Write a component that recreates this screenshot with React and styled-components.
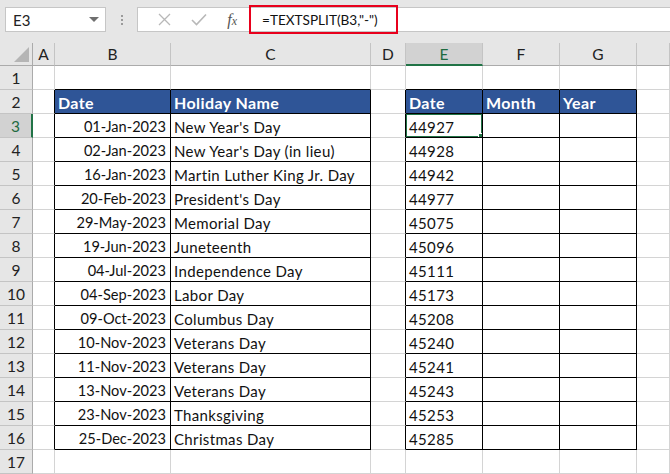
import React from "react";
import styled, { createGlobalStyle } from "styled-components";

const Global = createGlobalStyle`
  html, body { margin: 0; padding: 0; background: #fff; }
  body { width: 670px; height: 474px; overflow: hidden; font-family: Lato, "Liberation Sans", sans-serif; }
`;

const Page = styled.div`
  width: 670px;
  height: 474px;
  overflow: hidden;
  display: flex;
  flex-direction: column;
`;

const Toolbar = styled.div`
  height: 43px;
  box-sizing: border-box;
  background: #e6e6e6;
  display: flex;
  align-items: center;
  padding: 0 0 4px 5px;
`;

const NameBox = styled.div`
  width: 101px;
  height: 25px;
  box-sizing: border-box;
  background: #fff;
  border: 1px solid #c6c6c6;
  display: flex;
  align-items: center;
  justify-content: space-between;
  padding: 0 6px 0 7px;
  font-size: 15px;
  color: #222;
`;

const Caret = styled.span`
  width: 0;
  height: 0;
  border-left: 5px solid transparent;
  border-right: 5px solid transparent;
  border-top: 5px solid #6f6f6f;
`;

const Grip = styled.div`
  width: 31px;
  display: flex;
  flex-direction: column;
  align-items: center;
  gap: 2px;
  span { width: 2px; height: 2px; background: #9a9a9a; }
`;

const FxBox = styled.div`
  width: 112px;
  height: 25px;
  box-sizing: border-box;
  background: #fff;
  border: 1px solid #c6c6c6;
  border-right: none;
  display: flex;
  align-items: center;
  padding-left: 10px;
`;

const FxIcon = styled.span`
  width: 38px;
  display: flex;
  justify-content: center;
  align-items: baseline;
  color: ${p => p.$dark ? "#555" : "#b8b8b8"};
  font-family: "Liberation Serif", serif;
  font-style: italic;
  font-size: 16px;
`;

const FxSub = styled.span`
  font-size: 12px;
`;

const FormulaInput = styled.div`
  flex: 1;
  height: 25px;
  box-sizing: border-box;
  background: #fff;
  border-top: 1px solid #c6c6c6;
  border-bottom: 1px solid #c6c6c6;
  display: flex;
  align-items: center;
`;

const Highlight = styled.div`
  width: 149px;
  height: 29px;
  box-sizing: border-box;
  border: 2px solid #e8001c;
  display: flex;
  align-items: center;
  padding-left: 11px;
  font-size: 13.6px;
  color: #111;
`;

const Sheet = styled.div`
  display: grid;
  grid-template-columns: 33px 22px 116px 200px 35px 77px 77px 77px 1fr;
  grid-template-rows: 23px repeat(17, 24px);
`;

const Corner = styled.div`
  background: #e6e6e6;
  border-right: 1px solid #ababab;
  border-bottom: 1px solid #ababab;
  display: flex;
  align-items: flex-end;
  justify-content: flex-end;
  padding: 0 3px 3px 0;
  box-sizing: border-box;
`;

const Tri = styled.span`
  width: 0;
  height: 0;
  border-left: 15px solid transparent;
  border-bottom: 15px solid #b5b5b5;
`;

const ColHead = styled.div`
  box-sizing: border-box;
  background: ${p => p.$sel ? "#d2d2d2" : "#e6e6e6"};
  border-right: 1px solid #c4c4c4;
  border-bottom: ${p => p.$sel ? "2px solid #217346" : "1px solid #ababab"};
  display: flex;
  align-items: center;
  justify-content: center;
  font-size: 15.5px;
  color: ${p => p.$sel ? "#1e6b40" : "#222"};
`;

const RowHead = styled.div`
  box-sizing: border-box;
  background: ${p => p.$sel ? "#d2d2d2" : "#e6e6e6"};
  border-right: ${p => p.$sel ? "2px solid #217346" : "1px solid #ababab"};
  border-bottom: 1px solid #c4c4c4;
  display: flex;
  align-items: center;
  justify-content: center;
  padding-top: 1px;
  font-size: 15.5px;
  color: ${p => p.$sel ? "#1e6b40" : "#222"};
`;

const Cell = styled.div`
  position: relative;
  box-sizing: border-box;
  background: ${p => p.$head ? "#2f5597" : "#fff"};
  color: ${p => p.$head ? "#fff" : "#111"};
  font-weight: ${p => p.$head ? 700 : 400};
  border-right: 1px solid ${p => p.$br ? "#000" : "#d4d4d4"};
  border-bottom: 1px solid ${p => p.$bb ? "#000" : "#d4d4d4"};
  display: flex;
  align-items: center;
  justify-content: ${p => p.$right ? "flex-end" : "flex-start"};
  padding: 2px 4px 0 3px;
  font-size: ${p => p.$head ? "16px" : p.$right ? "14.6px" : "15px"};
  letter-spacing: ${p => p.$head ? "0.4px" : p.$right ? "0" : "0.35px"};
  white-space: nowrap;
  overflow: hidden;
`;

const Selection = styled.div`
  position: absolute;
  left: -1px;
  top: -1px;
  right: -1px;
  bottom: -1px;
  border: 2px solid #217346;
  pointer-events: none;
`;

const Handle = styled.span`
  position: absolute;
  right: -4px;
  bottom: -4px;
  width: 5px;
  height: 5px;
  background: #217346;
  border: 1px solid #fff;
`;

const holidays = [
  ["01-Jan-2023", "New Year's Day", 44927],
  ["02-Jan-2023", "New Year's Day (in lieu)", 44928],
  ["16-Jan-2023", "Martin Luther King Jr. Day", 44942],
  ["20-Feb-2023", "President's Day", 44977],
  ["29-May-2023", "Memorial Day", 45075],
  ["19-Jun-2023", "Juneteenth", 45096],
  ["04-Jul-2023", "Independence Day", 45111],
  ["04-Sep-2023", "Labor Day", 45173],
  ["09-Oct-2023", "Columbus Day", 45208],
  ["10-Nov-2023", "Veterans Day", 45240],
  ["11-Nov-2023", "Veterans Day", 45241],
  ["13-Nov-2023", "Veterans Day", 45243],
  ["23-Nov-2023", "Thanksgiving", 45253],
  ["25-Dec-2023", "Christmas Day", 45285],
];

const cols = ["A", "B", "C", "D", "E", "F", "G", ""];

const inTable = (r, c) =>
  r >= 2 && r <= 16 && (c === 1 || c === 2 || c === 4 || c === 5 || c === 6);

function cellContent(r, c) {
  if (r === 2) {
    const h = { 1: "Date", 2: "Holiday Name", 4: "Date", 5: "Month", 6: "Year" };
    return h[c] || "";
  }
  if (r >= 3 && r <= 16) {
    const d = holidays[r - 3];
    if (c === 1) return d[0];
    if (c === 2) return d[1];
    if (c === 4) return String(d[2]);
  }
  return "";
}

export default function App() {
  const rows = [];
  for (let r = 1; r <= 17; r++) {
    rows.push(<RowHead key={`rh${r}`} $sel={r === 3}>{r}</RowHead>);
    cols.forEach((_, c) => {
      const br = inTable(r, c) || inTable(r, c + 1);
      const bb = inTable(r, c) || inTable(r + 1, c);
      const head = r === 2 && inTable(r, c);
      const sel = r === 3 && c === 4;
      rows.push(
        <Cell key={`c${r}-${c}`} $br={br} $bb={bb} $head={head} $right={(c === 1 || c === 4) && r > 2 && c === 1}>
          {cellContent(r, c)}
          {sel && (
            <Selection>
              <Handle />
            </Selection>
          )}
        </Cell>
      );
    });
  }

  return (
    <Page>
      <Global />
      <Toolbar>
        <NameBox>
          <span>E3</span>
          <Caret />
        </NameBox>
        <Grip>
          <span />
          <span />
          <span />
        </Grip>
        <FxBox>
          <FxIcon>
            <svg width="13" height="13" viewBox="0 0 13 13">
              <path d="M1 1 L12 12 M12 1 L1 12" stroke="#b8b8b8" strokeWidth="1.3" fill="none" />
            </svg>
          </FxIcon>
          <FxIcon>
            <svg width="16" height="13" viewBox="0 0 16 13">
              <path d="M1 7 L5.5 11.5 L15 1.5" stroke="#b8b8b8" strokeWidth="1.6" fill="none" />
            </svg>
          </FxIcon>
          <FxIcon $dark>
            f<FxSub>x</FxSub>
          </FxIcon>
        </FxBox>
        <FormulaInput>
          <Highlight>=TEXTSPLIT(B3,"-")</Highlight>
        </FormulaInput>
      </Toolbar>
      <Sheet>
        <Corner>
          <Tri />
        </Corner>
        {cols.map((c, i) => (
          <ColHead key={`ch${i}`} $sel={c === "E"}>{c}</ColHead>
        ))}
        {rows}
      </Sheet>
    </Page>
  );
}
